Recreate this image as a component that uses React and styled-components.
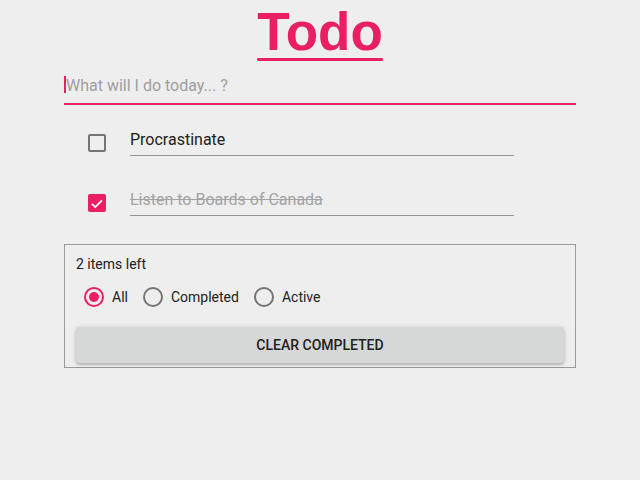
import React, { useState } from 'react';
import styled, { createGlobalStyle } from 'styled-components';

const PINK = '#e91e63';

const GlobalStyle = createGlobalStyle`
    body {
        margin: 0;
        background: #eeeeee;
        font-family: Roboto, "Liberation Sans", sans-serif;
    }
`

const Page = styled.div`
    width: 512px;
    margin: 0 auto;
    display: flex;
    flex-direction: column;
`

const Title = styled.h1`
    margin: 0;
    height: 64px;
    text-align: center;
    font-family: "Liberation Sans", Arial, sans-serif;
    font-size: 53px;
    line-height: 64px;
    font-weight: 700;
    color: ${PINK};
    text-decoration: underline;
    text-decoration-thickness: 3px;
    text-underline-offset: 8px;
`

const InputRow = styled.div`
    margin-top: 3px;
    height: 36px;
    display: flex;
    align-items: center;
    border-bottom: 2px solid ${PINK};
`

const Caret = styled.span`
    width: 2px;
    height: 17px;
    margin-top: -1px;
    background: ${PINK};
`

const NewTodo = styled.input`
    flex: 1;
    height: 36px;
    padding: 0;
    border: none;
    background: transparent;
    outline: none;
    font-family: inherit;
    font-size: 16px;
    color: #212121;
    caret-color: transparent;

    &::placeholder {
        color: #9e9e9e;
    }
`

const List = styled.div`
    display: flex;
    flex-direction: column;
    margin-top: 5px;
`

const Row = styled.div`
    height: 60px;
    display: flex;
    align-items: center;
    padding-left: 24px;
    gap: 24px;
`

const CheckBox = styled.span`
    box-sizing: border-box;
    width: 18px;
    height: 18px;
    margin-top: 6px;
    border-radius: 2px;
    border: 2px solid ${props => props.checked ? PINK : '#757575'};
    background: ${props => props.checked ? PINK : 'transparent'};
    display: flex;
    align-items: center;
    justify-content: center;
    cursor: pointer;
`

const TodoText = styled.div`
    width: 384px;
    padding: 6px 0 5px;
    line-height: 20px;
    font-size: 16px;
    border-bottom: 1px solid #949494;
    color: ${props => props.done ? '#a3a3a3' : '#212121'};
    text-decoration: ${props => props.done ? 'line-through' : 'none'};
`

const Footer = styled.div`
    margin-top: 14px;
    border: 1px solid #9a9a9a;
    padding: 9px 11px 4px;
    display: flex;
    flex-direction: column;
`

const Count = styled.div`
    font-size: 14px;
    line-height: 20px;
    color: #212121;
`

const Filters = styled.div`
    margin-top: 11px;
    height: 24px;
    display: flex;
    align-items: center;
    padding-left: 8px;
    gap: 15px;
`

const Option = styled.label`
    display: flex;
    align-items: center;
    gap: 8px;
    font-size: 14px;
    color: #212121;
    cursor: pointer;
`

const RadioRing = styled.span`
    box-sizing: border-box;
    width: 20px;
    height: 20px;
    border-radius: 50%;
    border: 2px solid ${props => props.checked ? PINK : '#757575'};
    display: flex;
    align-items: center;
    justify-content: center;

    &::after {
        content: "";
        width: 10px;
        height: 10px;
        border-radius: 50%;
        background: ${PINK};
        display: ${props => props.checked ? 'block' : 'none'};
    }
`

const ClearButton = styled.button`
    margin-top: 18px;
    height: 36px;
    border: none;
    border-radius: 4px;
    background: #d6d7d7;
    box-shadow: 0 1px 5px rgba(0, 0, 0, 0.2), 0 2px 2px rgba(0, 0, 0, 0.12);
    font-family: inherit;
    font-size: 14px;
    font-weight: 500;
    color: #212121;
    cursor: pointer;
`

const Check = () => (
    <svg width="15" height="15" viewBox="0 0 24 24">
        <path d="M3.5 12.5l5.5 5.5L20.5 6.5" fill="none" stroke="#fff" strokeWidth="3" />
    </svg>
)

const filters = ['All', 'Completed', 'Active'];

const App = () => {
    const [todos, setTodos] = useState([
        {text: 'Procrastinate', done: false},
        {text: 'Listen to Boards of Canada', done: true}
    ]);
    const [filter, setFilter] = useState('All');

    const toggle = index => setTodos(todos.map((t, i) => i === index ? {...t, done: !t.done} : t));

    return (
        <Page>
            <GlobalStyle/>
            <Title>Todo</Title>
            <InputRow>
                <Caret/>
                <NewTodo placeholder="What will I do today... ?"/>
            </InputRow>
            <List>
                {
                    todos.map((todo, i) => (
                        <Row key={i}>
                            <CheckBox checked={todo.done} onClick={() => toggle(i)}>
                                {todo.done && <Check/>}
                            </CheckBox>
                            <TodoText done={todo.done}>{todo.text}</TodoText>
                        </Row>
                    ))
                }
            </List>
            <Footer>
                <Count>2 items left</Count>
                <Filters>
                    {
                        filters.map(name => (
                            <Option key={name} onClick={() => setFilter(name)}>
                                <RadioRing checked={filter === name}/>
                                {name}
                            </Option>
                        ))
                    }
                </Filters>
                <ClearButton>CLEAR COMPLETED</ClearButton>
            </Footer>
        </Page>
    );
};

export default App;
